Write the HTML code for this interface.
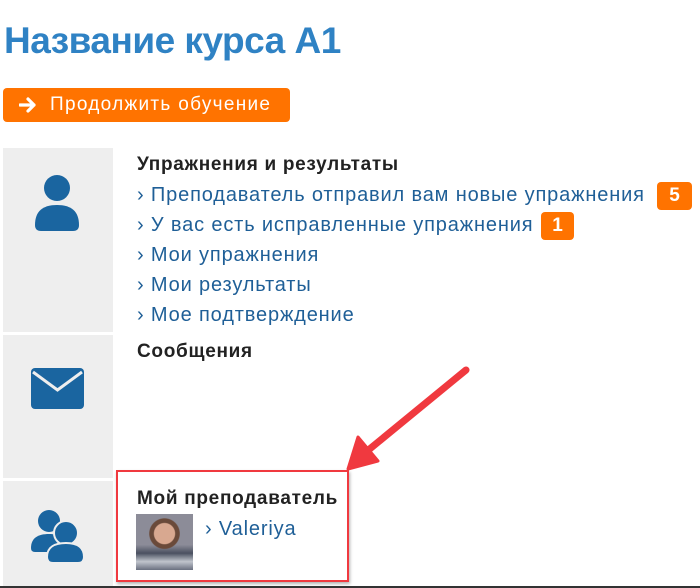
<!DOCTYPE html>
<html><head><meta charset="utf-8"><style>
body{margin:0;width:700px;height:588px;background:#fff;font-family:"Liberation Sans",sans-serif;position:relative;overflow:hidden}
.a{position:absolute}
h1{position:absolute;left:4px;top:20px;margin:0;font-size:37px;font-weight:bold;color:#2f82c4;letter-spacing:-0.5px;white-space:nowrap}
.btn{left:3px;top:88px;width:287px;height:34px;background:#ff7300;border-radius:4px;color:#fff;font-size:19px;line-height:34px;letter-spacing:1.3px}
.side{left:3px;width:110px;background:#eeeeee}
.t{left:137px;font-size:19px;line-height:30px;white-space:nowrap}
.h{color:#222;font-weight:bold;letter-spacing:0.7px}
.l{color:#1f5f97;font-size:20px;letter-spacing:0.85px}
.badge{background:#ff7300;color:#fff;font-weight:bold;border-radius:4px;font-size:19px;text-align:center;line-height:28px}
</style></head><body>
<h1>Название курса A1</h1>
<div class="a btn"><svg class="a" style="left:16px;top:9px" width="18" height="16" viewBox="0 0 18 16"><path d="M1 8H15M9 2L15 8L9 14" stroke="#fff" stroke-width="3.2" fill="none" stroke-linecap="round" stroke-linejoin="round"/></svg><span class="a" style="left:47px;top:0">Продолжить обучение</span></div>

<div class="a side" style="top:148px;height:184px"></div>
<div class="a side" style="top:335px;height:143px"></div>
<div class="a side" style="top:481px;height:107px"></div>
<svg class="a" style="left:33px;top:175px" width="48" height="56" viewBox="0 0 48 56"><circle cx="24" cy="13" r="13" fill="#1a65a0"/><path d="M2 50C2 36 10 30 24 30C38 30 46 36 46 50Q46 56 40 56H8Q2 56 2 50Z" fill="#1a65a0"/></svg>
<svg class="a" style="left:31px;top:368px" width="53" height="41" viewBox="0 0 53 41"><rect x="0" y="0" width="53" height="41" rx="4" fill="#1a65a0"/><path d="M2 4L26.5 22L51 4" stroke="#eee" stroke-width="3" fill="none"/></svg>
<svg class="a" style="left:31px;top:510px" width="54" height="53" viewBox="0 0 54 53"><circle cx="18" cy="11" r="11" fill="#1a65a0"/><path d="M0 38C0 28 7 24 18 24C29 24 34 28 34 38V42H4Q0 42 0 38Z" fill="#1a65a0"/><circle cx="35" cy="23" r="12" fill="#1a65a0" stroke="#eee" stroke-width="2"/><path d="M16 47C16 37 24 33 35 33C46 33 53 37 53 47Q53 53 47 53H22Q16 53 16 47Z" fill="#1a65a0" stroke="#eee" stroke-width="2"/></svg>

<div class="a t h" style="top:150px">Упражнения и результаты</div>
<div class="a t l" style="top:180px">› Преподаватель отправил вам новые упражнения</div>
<div class="a badge" style="left:657px;top:182px;width:35px">5</div>
<div class="a t l" style="top:210px">› У вас есть исправленные упражнения</div>
<div class="a badge" style="left:541px;top:212px;width:33px">1</div>
<div class="a t l" style="top:240px">› Мои упражнения</div>
<div class="a t l" style="top:270px">› Мои результаты</div>
<div class="a t l" style="top:300px">› Мое подтверждение</div>
<div class="a t h" style="top:337px">Сообщения</div>
<div class="a t h" style="top:484px">Мой преподаватель</div>
<div class="a" style="left:136px;top:514px;width:57px;height:56px;background:radial-gradient(circle at 50% 35%,#d8a890 0 22%,#6a4a3a 24% 32%,transparent 34%),linear-gradient(180deg,#8c8c98 0%,#8c8c98 55%,#4a5060 70%,#c0c4cc 85%,#6a7080 100%)"></div>
<div class="a t l" style="left:205px;top:514px">› Valeriya</div>
<div class="a" style="left:116px;top:470px;width:229px;height:108px;border:2px solid #f0393f;box-shadow:1px 2px 3px rgba(0,0,0,.3)"></div>
<svg class="a" style="left:340px;top:360px" width="140" height="120" viewBox="340 360 140 120"><path d="M466 370L366 452" stroke="#f0393f" stroke-width="7" stroke-linecap="round"/><path d="M348 469L358 437L378 461Z" fill="#f0393f" stroke="#f0393f" stroke-width="3" stroke-linejoin="round"/></svg>
<div class="a" style="left:0;top:586px;width:700px;height:2px;background:#333"></div>
</body></html>
